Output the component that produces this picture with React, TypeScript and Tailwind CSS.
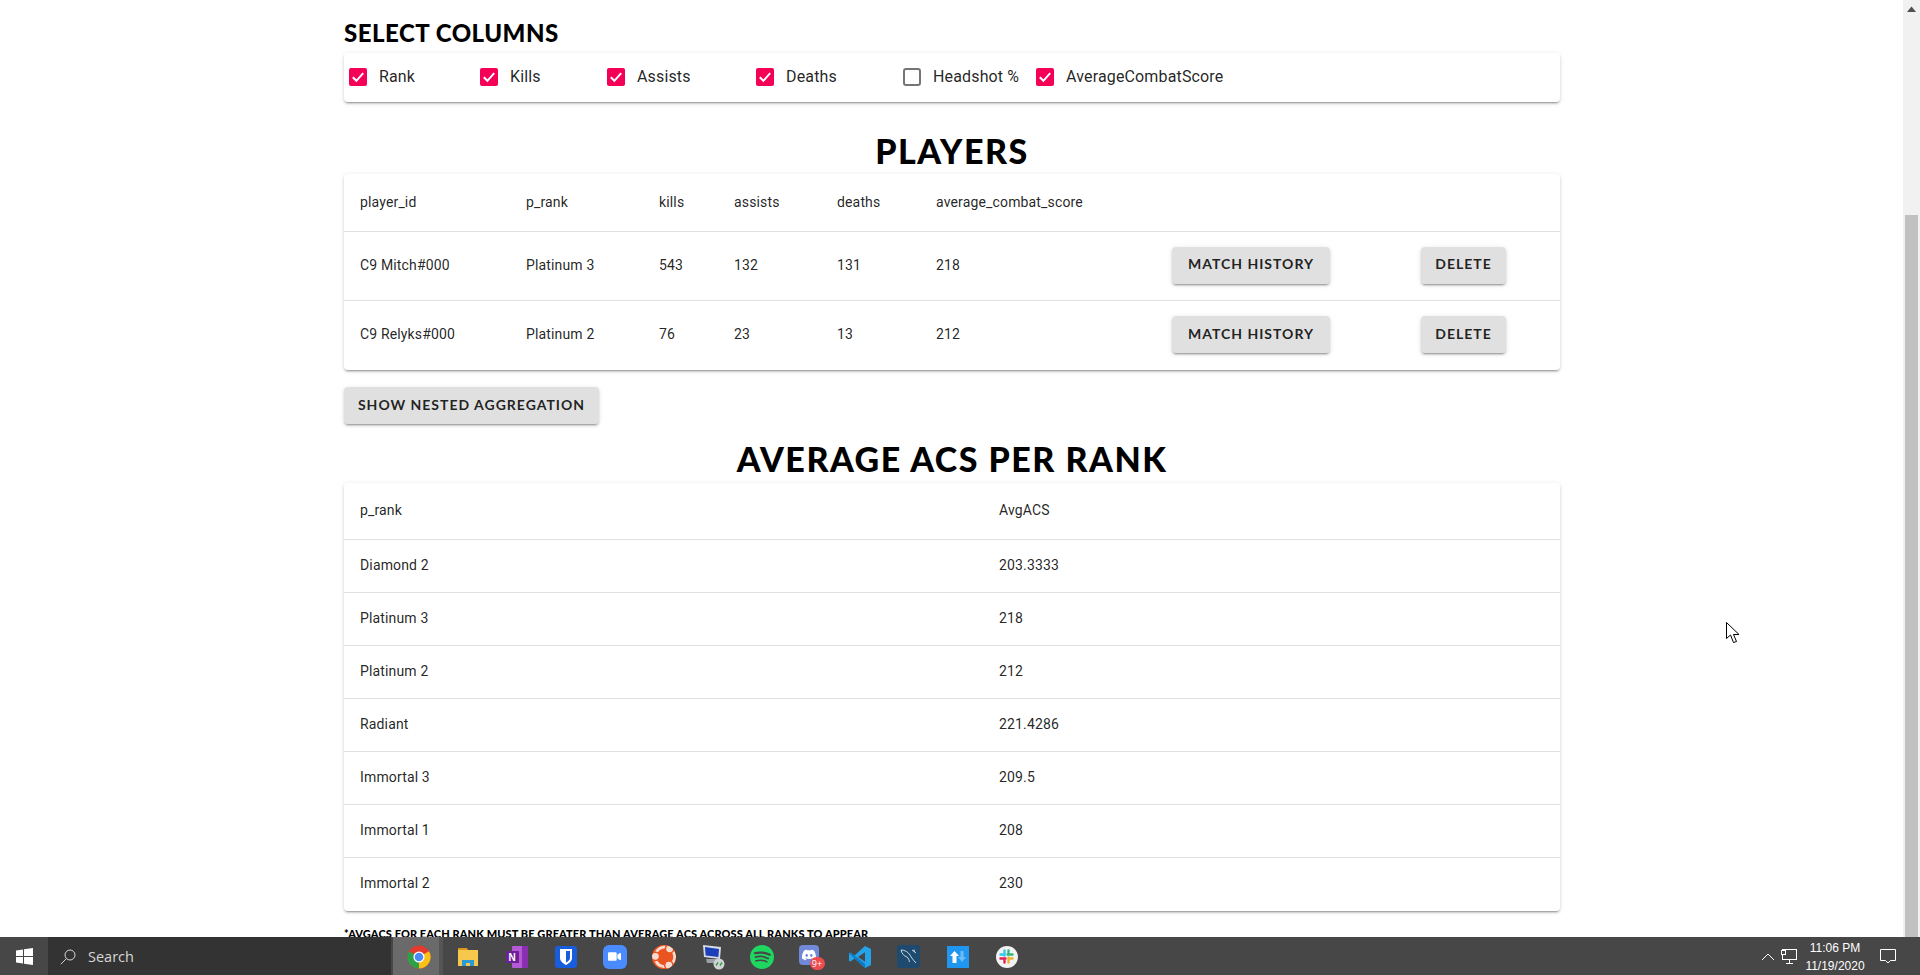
import { ReactNode } from "react";
import { FaVideo } from "react-icons/fa";
import { SiDiscord, SiSpotify, SiUbuntu } from "react-icons/si";

const columnOptions = [
	{ label: "Rank", checked: true, width: "w-[131px]" },
	{ label: "Kills", checked: true, width: "w-[127px]" },
	{ label: "Assists", checked: true, width: "w-[149px]" },
	{ label: "Deaths", checked: true, width: "w-[147px]" },
	{ label: "Headshot %", checked: false, width: "w-[133px]" },
	{ label: "AverageCombatScore", checked: true, width: "w-auto" },
];

const players = [
	["C9 Mitch#000", "Platinum 3", "543", "132", "131", "218"],
	["C9 Relyks#000", "Platinum 2", "76", "23", "13", "212"],
];

const ranks = [
	["Diamond 2", "203.3333"],
	["Platinum 3", "218"],
	["Platinum 2", "212"],
	["Radiant", "221.4286"],
	["Immortal 3", "209.5"],
	["Immortal 1", "208"],
	["Immortal 2", "230"],
];

const paperShadow =
	"shadow-[0_3px_1px_-2px_rgba(0,0,0,0.2),0_2px_2px_0_rgba(0,0,0,0.14),0_1px_5px_0_rgba(0,0,0,0.12)]";
const playerGrid = "grid grid-cols-[166px_133px_75px_103px_99px_236px_249px_155px]";
const rankGrid = "grid grid-cols-[639px_577px]";
const displayFont = "font-['Lato',sans-serif] font-black";
const cellText = "text-[14px] tracking-[0.15px] text-[rgba(0,0,0,0.87)]";

function Checkbox({ checked }: { checked: boolean }) {
	if (!checked) {
		return <div className="w-[18px] h-[18px] mb-[2px] shrink-0 rounded-[3px] border-2 border-[#757575]" />;
	}
	return (
		<div className="w-[18px] h-[18px] mb-[2px] shrink-0 rounded-[2px] bg-[#f50057] flex items-center justify-center">
			<svg width="14" height="14" viewBox="0 0 14 14" fill="none">
				<path d="M1.800 7.200 5.400 10.800 12.200 3.200" stroke="white" strokeWidth="2" />
			</svg>
		</div>
	);
}

function GreyButton({ children, className }: { children: ReactNode; className: string }) {
	return (
		<div
			className={`${className} h-[37px] rounded-[4px] bg-[#e0e0e0] flex items-center justify-center pb-[3px] font-['Lato',sans-serif] font-bold text-[14px] tracking-[1px] text-[rgba(0,0,0,0.87)] ${paperShadow}`}
		>
			{children}
		</div>
	);
}

function PlayersTable() {
	return (
		<div className={`rounded-[4px] bg-white ${cellText} ${paperShadow}`}>
			<div className={`${playerGrid} h-[58px] items-center border-b border-[#e0e0e0]`}>
				{["player_id", "p_rank", "kills", "assists", "deaths", "average_combat_score"].map((h) => (
					<div key={h} className="pl-4 whitespace-nowrap">
						{h}
					</div>
				))}
			</div>
			{players.map((row, i) => (
				<div
					key={row[0]}
					className={`${playerGrid} h-[69px] items-center pb-[2px] ${i === 0 ? "border-b border-[#e0e0e0]" : ""}`}
				>
					{row.map((cell) => (
						<div key={cell} className="pl-4">
							{cell}
						</div>
					))}
					<div className="pl-4">
						<GreyButton className="w-[158px]">MATCH HISTORY</GreyButton>
					</div>
					<div className="pl-4">
						<GreyButton className="w-[85px]">DELETE</GreyButton>
					</div>
				</div>
			))}
		</div>
	);
}

function RanksTable() {
	return (
		<div className={`rounded-[4px] bg-white ${cellText} ${paperShadow}`}>
			<div className={`${rankGrid} h-[57px] items-center pb-[2px] border-b border-[#e0e0e0]`}>
				<div className="pl-4">p_rank</div>
				<div className="pl-4">AvgACS</div>
			</div>
			{ranks.map(([rank, acs], i) => (
				<div
					key={rank}
					className={`${rankGrid} h-[53px] items-center pb-[2px] ${
						i < ranks.length - 1 ? "border-b border-[#e0e0e0]" : ""
					}`}
				>
					<div className="pl-4">{rank}</div>
					<div className="pl-4">{acs}</div>
				</div>
			))}
		</div>
	);
}

function ChromeIcon() {
	return (
		<svg width="24" height="24" viewBox="0 0 24 24">
			<circle cx="12" cy="12" r="11.5" fill="#e33b2e" />
			<path d="M12 12 22 6.200A11.500 11.500 0 0 1 12 23.500Z" fill="#fbc116" />
			<path d="M12 12 12 23.500A11.500 11.500 0 0 1 2 6.200Z" fill="#2fa04a" />
			<circle cx="12" cy="12" r="5.600" fill="white" />
			<circle cx="12" cy="12" r="4.300" fill="#4a8af4" />
		</svg>
	);
}

function ExplorerIcon() {
	return (
		<svg width="22" height="22" viewBox="0 0 22 22">
			<path d="M1 2h9l1 2H1Z" fill="#d99a1c" />
			<rect x="1" y="4" width="20" height="16" fill="#f6c94c" />
			<path d="M5 20v-6h12v6h-4v-3H9v3Z" fill="#2a9bd8" />
		</svg>
	);
}

function OneNoteIcon() {
	return (
		<svg width="24" height="24" viewBox="0 0 24 24">
			<rect x="7" y="1" width="16" height="22" rx="1" fill="#b45ad6" />
			<rect x="17" y="1" width="6" height="22" fill="#8a2fb0" />
			<rect x="1" y="6" width="13" height="12" fill="#6f1f97" />
			<text x="3.400" y="16" fontSize="10" fontWeight="700" fill="white" fontFamily="'Liberation Sans',sans-serif">
				N
			</text>
		</svg>
	);
}

function BitwardenIcon() {
	return (
		<svg width="24" height="24" viewBox="0 0 24 24">
			<rect x="1" y="1" width="22" height="22" rx="3" fill="#175ddc" />
			<path d="M6 4h12v9c0 3.400-3.400 5.600-6 7-2.600-1.400-6-3.600-6-7Z" fill="white" />
			<path d="M12 6h4v7c0 2-2 3.400-4 4.600Z" fill="#175ddc" />
		</svg>
	);
}

function RoundedGlyph({ bg, children }: { bg: string; children: ReactNode }) {
	return (
		<div className={`w-[24px] h-[24px] flex items-center justify-center ${bg}`}>{children}</div>
	);
}

function RemoteDesktopIcon() {
	return (
		<svg width="26" height="26" viewBox="0 0 26 26">
			<path d="M3 1 21 3 20 15 4 13Z" fill="#d7dce4" />
			<path d="M5 3 19 5 18.400 13 5.600 11.600Z" fill="#1b3fb8" />
			<path d="M6 15h12l2 4H7Z" fill="#9aa0a8" />
			<circle cx="19" cy="20" r="5.500" fill="#cfd3d6" />
			<path d="M16 21.500 18 18.500M20 21.500 22 18.500" stroke="#3b9a3f" strokeWidth="1.400" />
		</svg>
	);
}

function VsCodeIcon() {
	return (
		<svg width="24" height="24" viewBox="0 0 24 24">
			<path d="M17 1 23 4v16l-6 3L6.500 13.500 2.500 16.600 1 15.800V8.200l1.500-.8 4 3.100Z" fill="#23a3ea" />
			<path d="M17 7.200 10 12l7 4.800Z" fill="#474747" />
			<path d="M1 8.200 2.500 7.400 17 19v4L1 8.200Z" fill="#0e78c2" />
		</svg>
	);
}

function MysqlIcon() {
	return (
		<div className="w-[23px] h-[23px] rounded-[3px] bg-[#1d4a6e] flex items-center justify-center">
			<svg width="19" height="19" viewBox="0 0 19 19" fill="none" stroke="#c9d6df" strokeWidth="1">
				<path d="M2 3C6 3 9 5 11 8 12.500 10.500 14 13 17 16" />
				<path d="M2 3C3 7 5 9 8 10 9.500 11 10 13 10.500 15" />
				<path d="M13 3 17 6M15 2.500 15.500 5" />
			</svg>
		</div>
	);
}

function UpdownIcon() {
	return (
		<div className="w-[22px] h-[22px] bg-[#1f96f0] flex items-center justify-center">
			<svg width="18" height="18" viewBox="0 0 18 18">
				<path d="M5.500 3 10 8H7.500v7h-4V8H1Z" fill="white" />
				<path d="M11.500 3h3v6H17l-4 5-4-5h2.500Z" fill="#6cbcf6" />
			</svg>
		</div>
	);
}

function SlackIcon() {
	return (
		<div className="w-[22px] h-[22px] rounded-full bg-[#f2f2f2] flex items-center justify-center">
			<svg width="15" height="15" viewBox="0 0 15 15" fill="none" strokeWidth="2.400" strokeLinecap="round">
				<path d="M5.500 1.500v5M1.500 5.500h2" stroke="#36c5f0" />
				<path d="M13.500 5.500h-5M9.500 1.500v2" stroke="#2eb67d" />
				<path d="M9.500 13.500v-5M13.500 9.500h-2" stroke="#ecb22e" />
				<path d="M1.500 9.500h5M5.500 13.500v-2" stroke="#e01e5a" />
			</svg>
		</div>
	);
}

const taskbarIcons: ReactNode[] = [
	<ExplorerIcon key="explorer" />,
	<OneNoteIcon key="onenote" />,
	<BitwardenIcon key="bitwarden" />,
	<RoundedGlyph key="zoom" bg="bg-[#4a8cff] rounded-[6px]">
		<FaVideo className="text-white text-[13px]" />
	</RoundedGlyph>,
	<RoundedGlyph key="ubuntu" bg="bg-[#e95420] rounded-full">
		<SiUbuntu className="text-[#f9dcd0] text-[24px] bg-[#e95420] rounded-full" />
	</RoundedGlyph>,
	<RemoteDesktopIcon key="rdp" />,
	<SiSpotify key="spotify" className="text-[#1ed760] text-[24px]" />,
	<div key="discord" className="relative w-[24px] h-[24px]">
		<div className="w-[20px] h-[20px] rounded-[4px] bg-[#7289da] flex items-center justify-center">
			<SiDiscord className="text-white text-[14px]" />
		</div>
		<div className="absolute -right-[2px] -bottom-[1px] w-[15px] h-[13px] rounded-full bg-[#ee4b4f] text-white text-[9px] leading-[13px] text-center font-['Open_Sans',sans-serif]">
			9+
		</div>
	</div>,
	<VsCodeIcon key="vscode" />,
	<MysqlIcon key="mysql" />,
	<UpdownIcon key="updown" />,
	<SlackIcon key="slack" />,
];

function Taskbar() {
	return (
		<div className="h-[38px] shrink-0 bg-[#474747] flex items-center font-['Open_Sans',sans-serif] text-white">
			{/* Start */}
			<div className="w-[48px] h-full flex items-center justify-center pt-[1px]">
				<svg width="17" height="17" viewBox="0 0 17 17" fill="white">
					<path d="M0 2.400 7 1.400V8H0ZM8 1.200 17 0V8H8ZM0 9H7V15.600L0 14.600ZM8 9H17V17L8 15.800Z" />
				</svg>
			</div>

			{/* Search */}
			<div className="w-[343px] h-full bg-[#333333] flex items-center pl-[12px] pt-[1px] gap-[12px] text-[14.5px] text-[#d6d6d6]">
				<svg width="16" height="16" viewBox="0 0 16 16" fill="none" stroke="#d6d6d6" strokeWidth="1">
					<circle cx="10" cy="6" r="5" />
					<path d="M6.400 9.600 0.800 15.200" />
				</svg>
				<span>Search</span>
			</div>

			{/* Pinned */}
			<div className="ml-[2px] w-[46px] h-full bg-[#6a6a6a] flex items-center justify-center pl-[5px] pt-[1px]">
				<ChromeIcon />
			</div>
			<div className="w-[4px] h-full bg-[#555555]" />
			{taskbarIcons.map((icon, i) => (
				<div key={i} className="w-[49px] h-full flex items-center justify-center pt-[1px]">
					{icon}
				</div>
			))}

			{/* Tray */}
			<div className="ml-auto flex items-center h-full pt-[1px]">
				<svg width="14" height="8" viewBox="0 0 14 8" fill="none" stroke="white" strokeWidth="1">
					<path d="M1 7 7 1 13 7" />
				</svg>
				<svg className="ml-[6px]" width="16" height="15" viewBox="0 0 16 15" fill="none" stroke="white" strokeWidth="1">
					<rect x="1.500" y="0.500" width="14" height="10" />
					<path d="M8.500 11v3M5 14.500h7" />
					<rect x="0.500" y="1.500" width="4" height="4" fill="#474747" />
				</svg>
				<div className="ml-[2px] w-[72px] text-center font-['Liberation_Sans',sans-serif] text-[12px] leading-[18px]">
					<div>11:06 PM</div>
					<div>11/19/2020</div>
				</div>
				<svg className="ml-[9px] mr-[24px]" width="16" height="15" viewBox="0 0 16 15" fill="none" stroke="white" strokeWidth="1">
					<path d="M0.500 0.500h15v11h-5L8 14 5.500 11.500h-5Z" />
				</svg>
			</div>
		</div>
	);
}

function Scrollbar() {
	return (
		<div className="w-[17px] shrink-0 bg-[#f1f1f1] flex flex-col items-center">
			<svg className="mt-[6px] mb-[203px]" width="9" height="6" viewBox="0 0 9 6" fill="#505050">
				<path d="M4.500 0.500 9 6H0Z" />
			</svg>
			<div className="w-[13px] flex-1 bg-[#c1c1c1]" />
		</div>
	);
}

export default function App() {
	return (
		<div className="relative w-[1920px] h-[975px] overflow-hidden bg-white flex flex-col font-['Roboto',sans-serif]">
			<div className="flex flex-1 min-h-0">
				<div className="flex-1 min-w-0 overflow-hidden pl-[344px]">
					<div className="w-[1216px] flex flex-col">
						{/* Select columns */}
						<div className="h-[53px] pt-[13px]">
							<div className={`${displayFont} text-[24px] tracking-[0.5px] leading-[40px] text-black`}>SELECT COLUMNS</div>
						</div>
						<div className={`h-[49px] rounded-[4px] bg-white pl-[5px] flex items-center text-[16px] tracking-[0.15px] text-[rgba(0,0,0,0.87)] ${paperShadow}`}>
							{columnOptions.map((opt) => (
								<div key={opt.label} className={`${opt.width} flex items-center gap-[12px]`}>
									<Checkbox checked={opt.checked} />
									<span className="whitespace-nowrap pb-[1px]">{opt.label}</span>
								</div>
							))}
						</div>

						{/* Players */}
						<div className="h-[72px] flex items-end justify-center pb-[3px]">
							<div className={`${displayFont} text-[34px] tracking-[1.500px] leading-[40px] text-black`}>PLAYERS</div>
						</div>
						<PlayersTable />
						<GreyButton className="mt-[17px] w-[255px]">SHOW NESTED AGGREGATION</GreyButton>

						{/* Average ACS */}
						<div className="h-[59px] flex items-end justify-center pb-[4px]">
							<div className={`${displayFont} text-[34px] tracking-[1.500px] leading-[40px] text-black`}>AVERAGE ACS PER RANK</div>
						</div>
						<RanksTable />
						<div className={`${displayFont} mt-[15px] text-[11px] tracking-[0.1px] leading-[16px] text-black whitespace-nowrap`}>
							*AVGACS FOR EACH RANK MUST BE GREATER THAN AVERAGE ACS ACROSS ALL RANKS TO APPEAR
						</div>
					</div>
				</div>
				<Scrollbar />
			</div>
			<Taskbar />

			{/* Mouse pointer */}
			<svg className="absolute left-[1726px] top-[622px]" width="14" height="22" viewBox="0 0 14 22" fill="white" stroke="black" strokeWidth="1">
				<path d="M0.500 0.500V16.500L4.500 13 7.500 20.500 10.500 19.500 7.500 12.500H13Z" />
			</svg>
		</div>
	);
}
